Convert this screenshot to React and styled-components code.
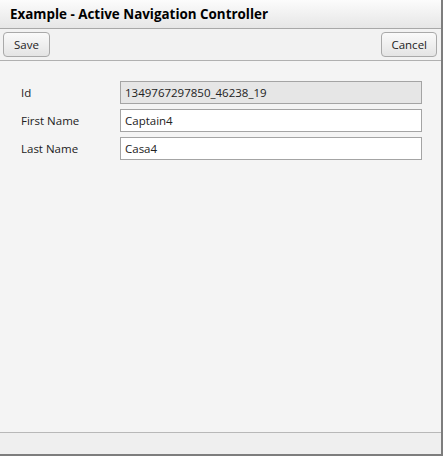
import React from 'react';
import styled, { createGlobalStyle } from 'styled-components';

const GlobalStyle = createGlobalStyle`
	html, body {
		margin: 0;
		padding: 0;
		background: #f4f4f4;
	}
	body {
		font-family: 'Open Sans', 'Noto Sans', sans-serif;
		font-size: 11.5px;
		color: #222;
	}
`;

const Window = styled.div`
	width: 443px;
	height: 456px;
	box-sizing: border-box;
	display: flex;
	flex-direction: column;
	border-right: 2px solid #7d7d7d;
	border-bottom: 2px solid #7d7d7d;
	background: #f4f4f4;
`;

const TitleBar = styled.div`
	height: 29px;
	box-sizing: border-box;
	display: flex;
	align-items: center;
	padding-left: 10px;
	background: linear-gradient(#fcfcfc, #e6e6e6);
	border-bottom: 1px solid #a8a8a8;
	font-weight: bold;
	font-size: 13.4px;
	color: #000;
`;

const Toolbar = styled.div`
	height: 32px;
	box-sizing: border-box;
	display: flex;
	justify-content: space-between;
	align-items: center;
	padding: 0 4px 0 3px;
	border-bottom: 1px solid #b0b0b0;
	background: #f2f2f2;
`;

const Button = styled.button`
	height: 25px;
	padding: 0 ${({ $pad }) => $pad}px;
	border: 1px solid #a9a9a9;
	border-radius: 4px;
	background: linear-gradient(#fafafa, #e4e4e4);
	font-family: inherit;
	font-size: 11.5px;
	color: #222;
`;

const Form = styled.div`
	flex: 1;
	display: grid;
	grid-template-columns: 99px 302px;
	grid-auto-rows: 23px;
	row-gap: 5px;
	padding: 20px 0 0 21px;
	align-content: start;
`;

const Label = styled.div`
	display: flex;
	align-items: center;
	color: #222;
`;

const Field = styled.div`
	box-sizing: border-box;
	display: flex;
	align-items: center;
	padding-left: 4px;
	border: 1px solid #a4a4a4;
	background: ${({ $readOnly }) => ($readOnly ? '#e6e6e6' : '#fff')};
	color: #222;
`;

const Footer = styled.div`
	height: 21px;
	border-top: 1px solid #b8b8b8;
	background: #efefef;
`;

const rows = [
	{ label: 'Id', value: '1349767297850_46238_19', readOnly: true },
	{ label: 'First Name', value: 'Captain4' },
	{ label: 'Last Name', value: 'Casa4' },
];

const App = () => (
	<>
		<GlobalStyle />
		<Window>
			<TitleBar>Example - Active Navigation Controller</TitleBar>
			<Toolbar>
				<Button $pad={10}>Save</Button>
				<Button $pad={9}>Cancel</Button>
			</Toolbar>
			<Form>
				{rows.map((r) => (
					<React.Fragment key={r.label}>
						<Label>{r.label}</Label>
						<Field $readOnly={r.readOnly}>{r.value}</Field>
					</React.Fragment>
				))}
			</Form>
			<Footer />
		</Window>
	</>
);

export default App;
